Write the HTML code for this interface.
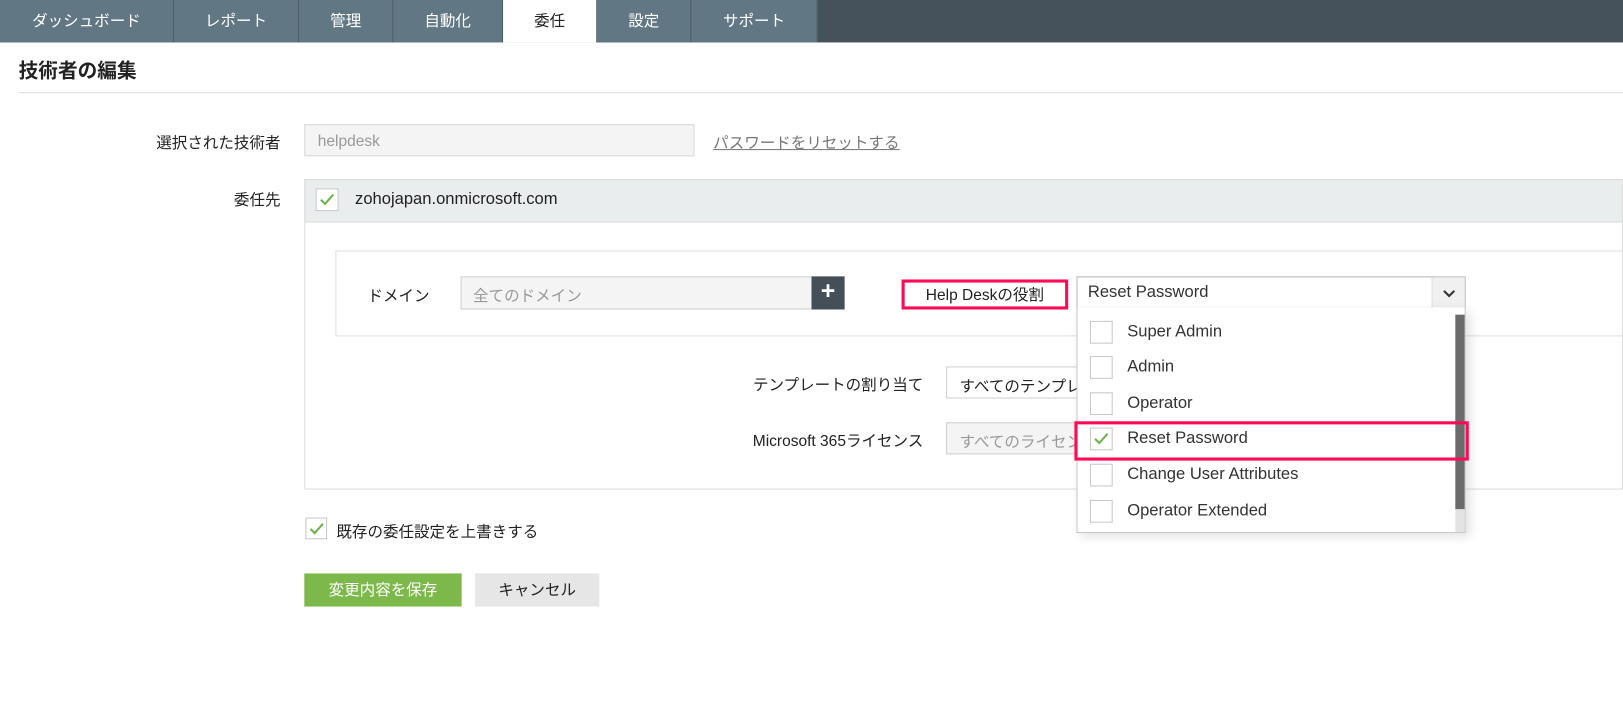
<!DOCTYPE html>
<html><head><meta charset="utf-8"><style>
*{box-sizing:border-box;margin:0;padding:0}
body{width:1623px;height:721px;background:#fff;position:relative;overflow:hidden;font-family:"Liberation Sans","Noto Sans CJK JP",sans-serif;font-size:15px;color:#222}
#w{position:absolute;left:0;top:0;width:1568px;height:697px;transform:scale(1.03508);transform-origin:0 0}
.a{position:absolute}
.nav{left:0;top:0;width:1568px;height:41px;background:#46525b}
.tab{position:absolute;top:0;height:41px;background:#627784;color:#fff;font-size:15px;line-height:41px;text-align:center;border-right:1px solid #4c5c66}
.tab.on{background:#fff;color:#222}
.cb{position:absolute;width:22px;height:22px;border:1px solid #c8c8c8;background:#fff}
.cb svg{position:absolute;left:2px;top:3px}
.item{position:absolute;left:1040px;width:366px;height:34px}
.item .cb{left:13px;top:6px}
.item span{position:absolute;left:49px;top:8px;font-size:16px;color:#333}
.t{padding-top:3px}
</style></head><body><div id="w">
<div class="a nav"></div>
<div class="tab" style="left:0;width:168px">ダッシュボード</div>
<div class="tab" style="left:168px;width:121px">レポート</div>
<div class="tab" style="left:289px;width:91px">管理</div>
<div class="tab" style="left:380px;width:106px">自動化</div>
<div class="tab on" style="left:486px;width:91px">委任</div>
<div class="tab" style="left:577px;width:91px">設定</div>
<div class="tab" style="left:668px;width:122px">サポート</div>

<div class="a" style="left:18px;top:54px;font-size:19px;font-weight:bold">技術者の編集</div>
<div class="a" style="left:18px;top:89px;width:1550px;height:1px;background:#e0e0e0"></div>

<div class="a" style="left:100px;top:127px;width:171px;text-align:right">選択された技術者</div>
<div class="a" style="left:294px;top:120px;width:377px;height:31px;background:#f4f4f4;border:1px solid #d8d8d8;color:#999;padding:7px 0 0 12px">helpdesk</div>
<div class="a" style="left:689px;top:127px;color:#777;text-decoration:underline">パスワードをリセットする</div>

<div class="a" style="left:100px;top:182px;width:171px;text-align:right">委任先</div>
<div class="a" style="left:294px;top:173px;width:1274px;height:300px;border:1px solid #dcdcdc"></div>
<div class="a" style="left:294px;top:173px;width:1274px;height:42px;background:#e9eded;border:1px solid #dcdcdc"></div>
<div class="cb" style="left:305px;top:182px"><svg width="16" height="14"><path d="M2 7 L6 11 L14 2" stroke="#6bb34a" stroke-width="2" fill="none"/></svg></div>
<div class="a" style="left:343px;top:184px;font-size:16px">zohojapan.onmicrosoft.com</div>

<div class="a" style="left:324px;top:242px;width:1244px;height:83px;border:1px solid #e0e0e0"></div>
<div class="a" style="left:355px;top:275px">ドメイン</div>
<div class="a" style="left:445px;top:267px;width:340px;height:32px;background:#f4f4f4;border:1px solid #d0d0d0;color:#999;padding:7px 0 0 11px">全てのドメイン</div>
<div class="a" style="left:784px;top:267px;width:32px;height:32px;background:#444f58;color:#fff;font-size:24px;line-height:30px;text-align:center;font-weight:bold">+</div>

<div class="a" style="left:871px;top:270px;width:161px;height:29px;border:3px solid #ff0a55;text-align:center;line-height:25px">Help Deskの役割</div>
<div class="a" style="left:1040px;top:267px;width:376px;height:31px;border:1px solid #b8b8b8;background:#fff;padding:6px 0 0 10px;font-size:16px;color:#333">Reset Password</div>
<div class="a" style="left:1383px;top:268px;width:32px;height:29px;background:#f0f0f0;border-left:1px solid #ddd"><svg width="32" height="29"><path d="M11 13 L16 18 L21 13" stroke="#333" stroke-width="2" fill="none"/></svg></div>

<div class="a" style="left:680px;top:361px;width:212px;text-align:right">テンプレートの割り当て</div>
<div class="a" style="left:914px;top:354px;width:130px;height:31px;border:1px solid #d0d0d0;padding:7px 0 0 12px;white-space:nowrap;overflow:hidden">すべてのテンプレート</div>
<div class="a" style="left:680px;top:415px;width:212px;text-align:right">Microsoft 365ライセンス</div>
<div class="a" style="left:914px;top:408px;width:130px;height:31px;background:#f4f4f4;border:1px solid #d0d0d0;color:#999;padding:7px 0 0 12px;white-space:nowrap;overflow:hidden">すべてのライセンス</div>

<div class="a" style="left:1040px;top:297px;width:376px;height:218px;background:#fff;border:1px solid #c8c8c8;border-top:none;box-shadow:4px 4px 10px rgba(0,0,0,.12)"></div>
<div class="a" style="left:1406px;top:304px;width:9px;height:188px;background:#6b6b6b"></div>
<div class="a" style="left:1406px;top:492px;width:9px;height:22px;background:#e3e3e3"></div>
<div class="item" style="top:304px"><div class="cb"></div><span>Super Admin</span></div>
<div class="item" style="top:338px"><div class="cb"></div><span>Admin</span></div>
<div class="item" style="top:373px"><div class="cb"></div><span>Operator</span></div>
<div class="item" style="top:407px"><div class="cb"><svg width="16" height="14"><path d="M2 7 L6 11 L14 2" stroke="#6bb34a" stroke-width="2" fill="none"/></svg></div><span>Reset Password</span></div>
<div class="item" style="top:442px"><div class="cb"></div><span>Change User Attributes</span></div>
<div class="item" style="top:477px"><div class="cb"></div><span>Operator Extended</span></div>
<div class="a" style="left:1038px;top:407px;width:381px;height:38px;border:3px solid #ff0a55"></div>

<div class="cb" style="left:295px;top:500px;width:21px;height:21px"><svg width="16" height="14"><path d="M2 7 L6 11 L14 2" stroke="#6bb34a" stroke-width="2" fill="none"/></svg></div>
<div class="a" style="left:325px;top:503px">既存の委任設定を上書きする</div>

<div class="a" style="left:294px;top:554px;width:152px;height:32px;background:#7cb84a;color:#fff;text-align:center;line-height:33px">変更内容を保存</div>
<div class="a" style="left:459px;top:554px;width:120px;height:32px;background:#e6e6e6;text-align:center;line-height:33px">キャンセル</div>
</div></body></html>
